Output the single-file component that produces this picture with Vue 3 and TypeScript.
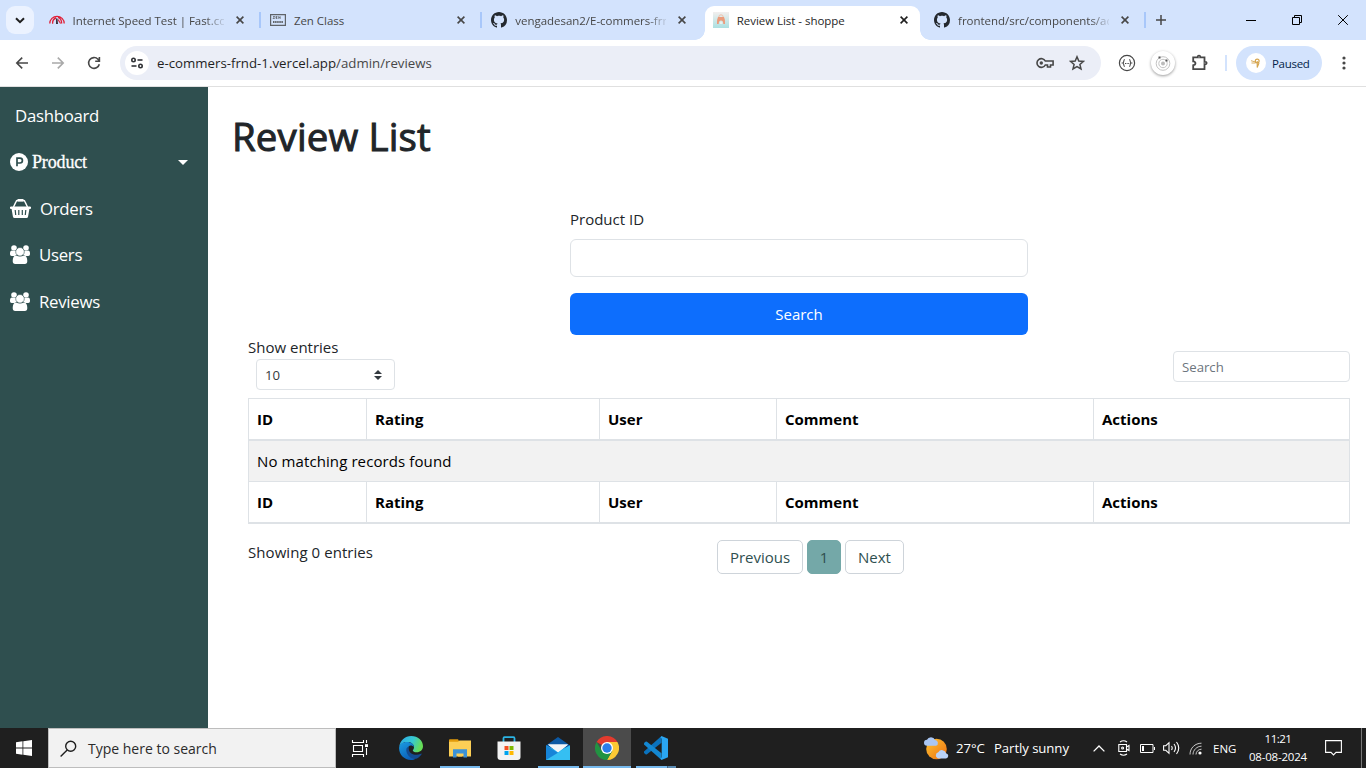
<script setup lang="ts">
import { ref } from 'vue'

interface Tab {
  id: number
  title: string
  icon: 'speed' | 'zen' | 'github' | 'shop'
  active?: boolean
}

const tabs: Tab[] = [
  { id: 1, title: 'Internet Speed Test | Fast.com', icon: 'speed' },
  { id: 2, title: 'Zen Class', icon: 'zen' },
  { id: 3, title: 'vengadesan2/E-commers-frnd', icon: 'github' },
  { id: 4, title: 'Review List - shoppe', icon: 'shop', active: true },
  { id: 5, title: 'frontend/src/components/admin', icon: 'github' },
]

const columns = ['ID', 'Rating', 'User', 'Comment', 'Actions']
const productId = ref('')
</script>

<template>
  <div class="screen">
    <header class="tabstrip">
      <button class="tabsearch" aria-label="Search tabs">
        <svg width="10" height="7" viewBox="0 0 10 7"><path d="M1 1.2l4 4 4-4" fill="none" stroke="#1f1f1f" stroke-width="2" /></svg>
      </button>
      <div class="tabs">
        <div v-for="tab in tabs" :key="tab.id" class="slot">
          <div class="tab" :class="{ active: tab.active, divided: tab.id !== 3 && !tab.active }">
            <svg v-if="tab.icon === 'speed'" class="fav" viewBox="0 0 16 16" fill="none">
              <path d="M.8 11.500a7.200 7.200 0 0 1 14.400 0M3.600 11.800c-.2-3 1.300-5.200 3.600-5.800M9 5.400c2.200.7 3.600 3 3.700 6" stroke="#e02038" stroke-width="1.300" />
              <path d="M9 7.500l2.600 4" stroke="#e02038" stroke-width="1.200" />
              <path d="M7 6.500h1.500l.5 5.500H7z" fill="#3b3540" />
            </svg>
            <svg v-else-if="tab.icon === 'zen'" class="fav" viewBox="0 0 16 16" fill="none">
              <path d="M.6 2.600h14.800v10.800H.6z" stroke="#5f6368" stroke-width="1.200" />
              <path d="M3 4.500h1.800L3 6.500h1.800M7.400 4.500H6v2h1.400M6 5.500h1.200M8.700 6.800V4.500l1.500 2V4.300" stroke="#5f6368" stroke-width=".8" />
              <path d="M3 9.500h10M3 10.500h10" stroke="#5f6368" stroke-dasharray="1.500 .6" stroke-width="1" />
            </svg>
            <svg v-else-if="tab.icon === 'github'" class="fav" viewBox="0 0 16 16" fill="#24292f">
              <path d="M8 0C3.580 0 0 3.580 0 8c0 3.540 2.290 6.530 5.470 7.590.4.070.55-.17.55-.38 0-.19-.010-.82-.010-1.490-2.010.37-2.530-.49-2.690-.94-.090-.23-.48-.94-.82-1.130-.28-.15-.68-.52-.010-.53.63-.010 1.080.58 1.230.82.72 1.210 1.870.87 2.330.66.070-.52.28-.87.51-1.070-1.780-.2-3.640-.89-3.640-3.950 0-.87.31-1.590.82-2.150-.080-.2-.36-1.020.080-2.120 0 0 .67-.21 2.200.82.64-.18 1.320-.27 2-.27s1.360.090 2 .27c1.530-1.040 2.200-.82 2.200-.82.44 1.100.16 1.920.080 2.120.51.56.82 1.270.82 2.150 0 3.070-1.870 3.750-3.650 3.950.29.25.54.73.54 1.480 0 1.070-.010 1.930-.010 2.200 0 .21.15.46.55.38A8.010 8.010 0 0 0 16 8c0-4.420-3.580-8-8-8z" />
            </svg>
            <svg v-else class="fav" viewBox="0 0 16 16" fill="none">
              <defs><linearGradient id="shopbg" x1="0" y1="0" x2="0" y2="1"><stop offset="0" stop-color="#f3efee" /><stop offset="1" stop-color="#abe0e1" /></linearGradient></defs>
              <path d="M0 0h16v16H0z" fill="url(#shopbg)" />
              <path d="M5.800 5a2.200 2.200 0 0 1 4.400 0" stroke="#f0bfa8" />
              <path d="M5 5h6q1.500 3 1 7h-1.700Q10.300 8.500 8 8.500T5.700 12H4q-.5-4 1-7z" fill="#eb9c7c" />
              <path d="M6.800 9.500h2.600V12H6.800z" fill="#e9f2ee" />
            </svg>
            <span class="title" :class="{ faded: tab.title.length > 22 }">{{ tab.title }}</span>
            <svg class="close" viewBox="0 0 8 8"><path d="M.6.6l6.800 6.800M7.400.6L.6 7.400" /></svg>
          </div>
        </div>
      </div>
      <svg class="plus" viewBox="0 0 10 10"><path d="M5 0v10M0 5h10" stroke="#474747" stroke-width="1.500" /></svg>
      <div class="window-controls">
        <svg viewBox="0 0 10 10"><path d="M0 5.500h10" /></svg>
        <svg viewBox="0 0 10 10"><path d="M.5 2.500h7v7h-7zM2.500 2.500v-2h7v7h-2" /></svg>
        <svg viewBox="0 0 10 10"><path d="M.2.2l9.600 9.600M9.800.2L.2 9.800" /></svg>
      </div>
    </header>

    <div class="toolbar">
      <nav class="history">
        <svg viewBox="0 0 16 16" stroke="#474747"><path d="M14 8H3M8.200 2.600L2.800 8l5.400 5.400" /></svg>
        <svg viewBox="0 0 16 16" stroke="#a9a9a9"><path d="M2 8h11M7.800 2.600L13.200 8l-5.400 5.400" /></svg>
        <svg viewBox="0 0 16 16" stroke="#474747"><path d="M13.300 9.200A5.400 5.400 0 1 1 12 4.300l1.200 1.300M13.400 2v4.200H9.200" /></svg>
      </nav>
      <div class="omnibox">
        <span class="site">
          <svg viewBox="0 0 14 14" fill="none" stroke="#303236" stroke-width="1.600"><circle cx="3.500" cy="4" r="1.700" /><path d="M7.500 4h5" /><circle cx="10.500" cy="10" r="1.700" /><path d="M1.500 10h5" /></svg>
        </span>
        <span class="url">e-commers-frnd-1.vercel.app<i>/admin/reviews</i></span>
        <svg class="key" viewBox="0 0 18 12" fill="none" stroke="#474747" stroke-width="1.600"><path d="M9.300 4a4.400 4.400 0 1 0 0 4h2.200v2h3V8h2.600V4z" /><circle cx="5.300" cy="6" r="1.700" fill="#474747" stroke="none" /></svg>
        <svg class="star" viewBox="0 0 16 16" fill="none" stroke="#474747" stroke-width="1.500"><path d="M8 1.800l1.800 4.200 4.600.4-3.500 3 1.100 4.500L8 11.500l-4 2.400 1.100-4.500-3.500-3 4.600-.4z" /></svg>
      </div>
      <div class="extensions">
        <svg class="braces" viewBox="0 0 18 18" fill="none" stroke="#474747"><circle cx="9" cy="9" r="7.600" stroke-width="1.200" /><path d="M6.800 5.500c-1.600 0-.3 3-2 3.500 1.700.5.400 3.500 2 3.500M11.200 5.500c1.600 0 .3 3 2 3.500-1.700.5-.4 3.500-2 3.500" stroke-width="1.100" /><path d="M7 9.500h1M8.600 9.500h1M10.200 9.500h1" stroke-width="1.100" /></svg>
        <span class="orbit"><svg viewBox="0 0 18 18" fill="none" stroke="#c4c4c4"><circle cx="9" cy="9.500" r="6.800" /><circle cx="9" cy="9.500" r="4.200" /><circle cx="9" cy="9.500" r="2" fill="#bbb" stroke="none" /><path d="M4.500 2.500h2v2h-2zM11.500 5.500h2v2h-2z" fill="#555" stroke="none" /></svg></span>
        <svg class="puzzle" viewBox="0 0 18 18" fill="none" stroke="#474747" stroke-width="1.800"><path d="M2.200 3.400h4.600c-.8-2.500 3.200-2.500 2.400 0h4.300v4.500c2.800-.7 2.800 3 0 2.300v5H2.200v-4c3-.4 3-3.400 0-3.800z" /></svg>
        <span class="divider"></span>
        <span class="profile">
          <span class="avatar"><svg viewBox="0 0 12 12" fill="none" stroke="#d5a44c"><path d="M1 3.700l4.500 1.300M1.500 6h4" stroke-width=".9" /><circle cx="7.200" cy="4" r="1.900" stroke-width="1.200" /><path d="M7.200 4v6.500L9 6" stroke-width="1.100" /></svg></span>
          <span class="paused">Paused</span>
        </span>
        <svg class="dots" viewBox="0 0 4 14" fill="#474747"><circle cx="2" cy="2" r="1.600" /><circle cx="2" cy="7" r="1.600" /><circle cx="2" cy="12" r="1.600" /></svg>
      </div>
    </div>

    <div class="page">
      <aside class="sidebar">
        <a class="item dash">Dashboard</a>
        <a class="item product">
          <svg class="picon" viewBox="0 0 18 18"><circle cx="9" cy="9" r="9" fill="#fff" /><path d="M7 13.300V5.200h3a2.300 2.300 0 0 1 0 4.800H7" fill="none" stroke="#2f4f4f" stroke-width="1.700" /></svg>
          <span>Product</span>
          <svg class="caret" viewBox="0 0 10 5"><path d="M0 0h10L5 5z" fill="#fff" /></svg>
        </a>
        <a class="item orders">
          <svg class="basket" viewBox="0 0 21 19" fill="none"><path d="M3.500 8l2.600-5.500Q6.500 1.500 7.500 1.500h6q1 0 1.400 1L17.500 8" stroke="#fff" stroke-width="1.500" /><path d="M7.600 0h5.800v2.500H7.600z" fill="#fff" /><path d="M1 7.500h19a1 1 0 0 1 0 2.500h-.6l-1.300 7.500q-.3 1.500-1.600 1.500h-12q-1.300 0-1.600-1.500L1.600 10H1a1 1 0 0 1 0-2.500z" fill="#fff" /><path d="M5.200 11l.5 5M8.800 11v5M12.300 11v5M15.800 11l-.5 5" stroke="#2f4f4f" stroke-width="1.200" /></svg>
          <span>Orders</span>
        </a>
        <a v-for="name in ['Users', 'Reviews']" :key="name" class="item people">
          <svg class="group" viewBox="0 0 20 19" fill="#fff"><circle cx="4" cy="3" r="2.800" /><circle cx="16" cy="3" r="2.800" /><path d="M0 8.500Q0 5.500 2 5.500q2 1 4 0l1 1v3L4.500 11H1.700Q0 11 0 9.200zM20 8.500q0-3-2-3-2 1-4 0l-1 1v3l2.500 1.500h2.800q1.700 0 1.700-1.800z" /><circle cx="10" cy="6.800" r="4.300" stroke="#2f4f4f" stroke-width=".6" /><path d="M2.700 16q0-5.600 3.400-5.600 3.900 2.300 7.800 0 3.400 0 3.400 5.600 0 3-2.500 3H5.200q-2.500 0-2.500-3z" /></svg>
          <span>{{ name }}</span>
        </a>
      </aside>

      <main class="content">
        <h1>Review List</h1>
        <form class="search" @submit.prevent>
          <label for="pid">Product ID</label>
          <input id="pid" v-model="productId" />
          <button type="submit">Search</button>
        </form>
        <section class="listing">
          <div class="controls">
            <div class="length">
              <div class="showlabel">Show entries</div>
              <div class="select">
                <span>10</span>
                <svg viewBox="0 0 8 10" fill="#343a40"><path d="M4 0l4 4H0zM4 10L0 6h8z" /></svg>
              </div>
            </div>
            <div class="filter">Search</div>
          </div>
          <table>
            <colgroup><col class="c1" /><col class="c2" /><col class="c3" /><col class="c4" /><col class="c5" /></colgroup>
            <thead><tr><th v-for="c in columns" :key="c">{{ c }}</th></tr></thead>
            <tbody><tr><td colspan="5">No matching records found</td></tr></tbody>
            <tfoot><tr><th v-for="c in columns" :key="c">{{ c }}</th></tr></tfoot>
          </table>
          <div class="footer">
            <div class="info">Showing 0 entries</div>
            <div class="pager">
              <button class="prev">Previous</button>
              <button class="current">1</button>
              <button class="next">Next</button>
            </div>
          </div>
        </section>
      </main>
    </div>

    <footer class="taskbar">
      <div class="start"><svg viewBox="0 0 16 16" fill="#fff"><path d="M0 2.200l6.500-.9v6.200H0zM7.300 1.200L16 0v7.500H7.300zM0 8.500h6.500v6.200L0 13.800zM7.300 8.500H16V16l-8.700-1.200z" /></svg></div>
      <div class="tsearch">
        <svg viewBox="0 0 17 17" fill="none" stroke="#1f1f1f" stroke-width="1.400"><circle cx="10.700" cy="6.300" r="5" /><path d="M7.200 9.900L.6 16.500" /></svg>
        <span>Type here to search</span>
      </div>
      <div class="app view"><svg width="18" height="17" viewBox="0 0 18 17" fill="none" stroke="#fff"><path d="M2.500 5.500h9v6h-9zM1.500 0v2.500h11V0M1.500 17v-2.500h11V17M15.500 0v3M15.500 8v7" stroke-width="1.100" /><path d="M14 4.200h3v2.800h-3z" fill="#fff" stroke="none" /></svg></div>
      <div class="app edge">
        <svg width="24" height="24" viewBox="0 0 24 24">
          <defs>
            <linearGradient id="e1" x1="0" y1="0" x2="1" y2=".3"><stop offset="0" stop-color="#2ba7e8" /><stop offset=".6" stop-color="#37c9d2" /><stop offset="1" stop-color="#66dd57" /></linearGradient>
            <linearGradient id="e2" x1="0" y1="0" x2=".6" y2="1"><stop offset="0" stop-color="#1b9de2" /><stop offset="1" stop-color="#0b5eb8" /></linearGradient>
          </defs>
          <path d="M.3 10.500C1.200 4.300 6 0 12.200 0 19 0 24 4.800 24 10.200c0 3.700-3 6-6.200 6-2.500 0-4-1-4-1.800 0-.7 1.200-1 1.200-3.200C15 8 12 6 8.500 6 4.500 6 1.500 8 .3 10.500z" fill="url(#e1)" />
          <path d="M.1 12C.2 8 4 6 8 6c4 0 6.900 2.200 6.900 5-.8-1-2-1.500-3-1.500-2.200 0-3.700 2.500-3.200 5.500.6 4 4.500 7 8 7.400C15.500 23.600 14 24 12 24 5 24-.1 18.500.1 12z" fill="url(#e2)" />
          <path d="M9.500 10.400c-2 .9-2.600 3-2 5.300 1.100 4.600 5.300 7.700 9.700 7 2.500-1 4.300-2.700 5.400-4.500.2-.5-.2-.8-.7-.5-5 2.500-11.500.3-12-4-.2-1.400 0-2.500-.4-3.300z" fill="#134b91" />
        </svg>
      </div>
      <div class="app files open">
        <svg width="22" height="19" viewBox="0 0 22 19"><path d="M0 1Q0 .3 1 .3h8L10.500 3H0z" fill="#e29b0b" /><path d="M0 2.800h9L10.500 1.500H22v16H0z" fill="#fccf56" /><path d="M4 18.500V10.300h14v8.200h-3.500v-4h-7v4z" fill="#3b92d6" /><path d="M9 15h4v2.500H9z" fill="#fccf56" /></svg>
      </div>
      <div class="app store">
        <svg width="24" height="25" viewBox="0 0 24 25"><path d="M6.500 6V2.200q0-1 1-1h9q1 0 1 1V6" fill="none" stroke="#2bb4e4" stroke-width="1.800" /><path d="M.5 5.500h23v15.500q0 3-3 3h-17q-3 0-3-3z" fill="#f3f3f3" /><path d="M7.500 10h4v4h-4z" fill="#f25022" /><path d="M12.500 10h4v4h-4z" fill="#7fba00" /><path d="M7.500 15h4v4h-4z" fill="#00a4ef" /><path d="M12.500 15h4v4h-4z" fill="#ffb900" /></svg>
      </div>
      <div class="app mail open">
        <svg width="24" height="23" viewBox="0 0 24 23"><path d="M0 8.500L12 0l12 8.500V12H0z" fill="#0c59a4" /><path d="M2 7.500h20L13 15h-2z" fill="#f2f5f8" /><path d="M0 8.500L12 14l12-5.500V23H0z" fill="#29b6ee" /><path d="M2 7.500h20L12 15.500z" fill="#f2f5f8" /><path d="M0 8.500L24 23H0z" fill="#1684d8" /><path d="M24 8.500L0 23h24z" fill="#35bff2" /></svg>
      </div>
      <div class="app chrome open">
        <svg width="24" height="24" viewBox="0 0 24 24"><path d="M12 12L1.600 6A12 12 0 0 1 22.400 6z" fill="#e33b2e" /><path d="M12 6h10.400A12 12 0 0 1 12 24l5.200-9z" fill="#fcc934" /><path d="M6.800 15L1.600 6A12 12 0 0 0 12 24l5.200-9z" fill="#229342" /><circle cx="12" cy="12" r="6" fill="#fff" /><circle cx="12" cy="12" r="4.700" fill="#2b7de9" /></svg>
      </div>
      <div class="app code open">
        <svg width="24" height="24" viewBox="0 0 24 24"><path d="M17.500 0L0 15.500q-.5 1 .3 1.700l1.200 1q.7.400 1.500 0L17.500 6.800z" fill="#0a72bd" /><path d="M17.500 24L0 8.500q-.5-1 .3-1.700l1.200-1q.7-.4 1.500 0l14.500 11.400z" fill="#1488d2" /><path d="M17.500 0L24 2.800v18.400L17.500 24l-1-1.500q1.200-.5 1.200-2V3.500q0-1.500-1.200-2z" fill="#2aa6f2" /></svg>
      </div>
      <div class="tray">
        <svg class="weather" viewBox="0 0 25 23"><defs><linearGradient id="sun" x1="0" y1="0" x2="1" y2="1"><stop offset="0" stop-color="#fdc32f" /><stop offset="1" stop-color="#ee6f13" /></linearGradient></defs><circle cx="12.500" cy="12" r="10.300" fill="url(#sun)" /><path d="M3 8.800a3 3 0 0 1 0-6A4.300 4.300 0 0 1 11 3a3 3 0 0 1 1 5.800z" fill="#a9c6f3" /><path d="M14 21.500a3.300 3.300 0 0 1 .3-6.300 4.300 4.300 0 0 1 7.800 1 2.700 2.700 0 0 1 0 5.300z" fill="#b9d2f8" /></svg>
        <span class="temp">27°C</span>
        <span class="cond">Partly sunny</span>
        <svg class="up" viewBox="0 0 12 7" fill="none" stroke="#fff" stroke-width="1.300"><path d="M.6 6.400L6 1l5.400 5.400" /></svg>
        <svg class="meet" viewBox="0 0 12 16" fill="none" stroke="#fff" stroke-width="1.100"><path d="M.8 4.500h7.700v7H.8zM8.500 7l2.500-1.500v5L8.500 9M2 2Q5.500-.5 9 2M2 14q3.500 2.500 7 0" /><circle cx="4.600" cy="8" r="1" /></svg>
        <svg class="battery" viewBox="0 0 15 9" fill="none" stroke="#fff"><path d="M.5.500h12.500v8H.5zM14.500 3v3" /><path d="M2 2h2v5H2z" fill="#fff" stroke="none" /></svg>
        <svg class="volume" viewBox="0 0 17 14" fill="none" stroke="#fff" stroke-width="1.100"><path d="M.6 4.700h2.200L6 1.700v10.600L2.800 9.300H.6zM8.500 5q1.400 2 0 4M11 3q3 4 0 8M13.500 1q4.500 6 0 12" /></svg>
        <svg class="wifi" viewBox="0 0 13 13" fill="none" stroke="#c9c9c9"><path d="M1 12.500C1 6 6 1.200 12.500 1.200M4 12.500C4 8 8 4.200 12.500 4.200M7 12.500c0-3 2.500-5.300 5.500-5.300" /><circle cx="11" cy="11" r="1.600" fill="#fff" stroke="none" /></svg>
        <span class="lang">ENG</span>
        <div class="clock"><span class="time">11:21</span><span class="date">08-08-2024</span></div>
        <svg class="note" viewBox="0 0 17 16" fill="none" stroke="#fff" stroke-width="1.100"><path d="M.6.600h15.800v11.800h-5.400L8.500 15 6 12.400H.6z" /></svg>
        <span class="peek"></span>
      </div>
    </footer>
  </div>
</template>

<style>
body { margin: 0; overflow: hidden; }
</style>

<style scoped>
* { box-sizing: border-box; }
.screen { width: 1366px; height: 768px; display: flex; flex-direction: column; overflow: hidden; background: #fff; font-family: "Open Sans", "Noto Sans", sans-serif; color: #212529; white-space: nowrap; }
svg { display: block; flex: none; }
button { font: inherit; padding: 0; border: 0; }

.tabstrip { height: 40px; flex: none; background: #d3e3fd; display: flex; align-items: center; padding-left: 6px; }
.tabsearch { width: 28px; height: 28px; border-radius: 9px; background: #ebf2ff; display: grid; place-items: center; margin-right: 6px; }
.tabs { display: flex; height: 40px; width: 1108px; }
.slot { width: 221.400px; flex: none; padding: 6px 6px 0 .5px; }
.tab { height: 34px; width: 215px; padding: 0 12px 6px 8px; display: flex; align-items: center; position: relative; font-size: 11.500px; letter-spacing: -.030px; color: #474747; }
.tab.active { background: #fff; border-radius: 9px 9px 0 0; color: #1f1f1f; }
.tab.active::before, .tab.active::after { content: ""; position: absolute; bottom: 0; width: 10px; height: 10px; }
.tab.active::before { left: -10px; background: radial-gradient(circle at 0 0, transparent 9.500px, #fff 10px); }
.tab.active::after { right: -10px; background: radial-gradient(circle at 100% 0, transparent 9.500px, #fff 10px); }
.tab.divided::after { content: ""; position: absolute; right: -5px; top: 6px; width: 2px; height: 16px; background: #a8c7fa; }
.fav { width: 16px; height: 16px; }
.title { width: 152px; margin-left: 8px; overflow: hidden; }
.title.faded { mask-image: linear-gradient(90deg, #000 132px, transparent 154px); }
.close { width: 8px; height: 8px; margin-left: 12px; fill: none; stroke: #474747; stroke-width: 1.600; }
.active .close { stroke: #1f1f1f; }
.plus { width: 10px; height: 10px; margin-left: 8px; }
.window-controls { display: flex; gap: 36px; margin-left: auto; margin-right: 18px; }
.window-controls svg { width: 10px; height: 10px; fill: none; stroke: #000; }

.toolbar { height: 47px; flex: none; display: flex; align-items: center; border-bottom: 1px solid #e0e0e0; padding-left: 14px; background: #fff; }
.history { display: flex; gap: 20px; width: 106px; }
.history svg { width: 16px; height: 16px; fill: none; stroke-width: 1.600; }
.omnibox { width: 981px; height: 34px; border-radius: 17px; background: #ebeef7; display: flex; align-items: center; padding: 0 16px 0 5px; }
.site { width: 24px; height: 24px; border-radius: 50%; background: #fff; display: grid; place-items: center; margin-right: 8px; }
.site svg { width: 14px; height: 14px; }
.url { font-size: 13.250px; color: #1f1f1f; flex: 1; }
.url i { font-style: normal; color: #474747; }
.key { width: 18px; height: 12px; margin-right: 15px; }
.star { width: 16px; height: 16px; }
.extensions { flex: 1; display: flex; align-items: center; }
.braces { width: 18px; height: 18px; margin-left: 17px; }
.orbit { width: 24px; height: 24px; border-radius: 50%; margin-left: 15px; display: grid; place-items: center; box-shadow: 0 1px 3px #0006; }
.orbit svg { width: 18px; height: 18px; }
.puzzle { width: 18px; height: 18px; margin-left: 16px; }
.divider { width: 2px; height: 16px; background: #d3e3fd; margin: 0 9px 0 16px; }
.profile { width: 86px; height: 34px; border-radius: 17px; background: #d3e3fd; display: flex; align-items: center; padding-left: 10px; }
.avatar { width: 20px; height: 20px; border-radius: 50%; background: #fff; display: grid; place-items: center; margin-right: 6px; }
.avatar svg { width: 12px; height: 12px; }
.paused { font-size: 11.500px; letter-spacing: -.300px; color: #041e49; }
.dots { width: 4px; height: 14px; margin-left: 20px; }

.page { flex: 1; display: flex; min-height: 0; }
.sidebar { width: 208px; background: #2f4f4f; color: #fff; padding-top: 5px; }
.item { height: 46.500px; display: flex; align-items: center; padding-left: 10px; font-size: 16.800px; letter-spacing: -.280px; }
.dash { padding-left: 15px; }
.product { font-family: "Liberation Serif", serif; font-size: 18px; letter-spacing: -.150px; padding-top: 1px; -webkit-text-stroke: .3px #fff; }
.picon { width: 18px; height: 18px; margin-right: 4px; }
.caret { width: 10px; height: 5px; margin-left: auto; margin-right: 20px; }
.basket { width: 21px; height: 19px; margin-right: 9px; }
.group { width: 20px; height: 19px; margin-right: 9px; }

.content { flex: 1; padding: 21px 16px 0 25px; font-size: 15px; }
h1 { margin: 0 0 0 -1px; font-size: 38.400px; line-height: 57px; height: 58px; font-weight: 400; letter-spacing: .150px; -webkit-text-stroke: 1px #212529; }
.search { width: 458px; margin: 41px 0 0 337px; display: flex; flex-direction: column; }
label { height: 32px; line-height: 24px; }
#pid { height: 38px; border: 1px solid #dee2e6; border-radius: 6px; padding: 6px 12px; outline: 0; font: inherit; margin-bottom: 16px; }
.search button { height: 42px; border-radius: 6px; background: #0d6efd; color: #fff; }
.listing { padding-left: 15px; }
.controls { display: flex; justify-content: space-between; height: 63px; }
.showlabel { height: 24px; line-height: 24px; }
.select { width: 139px; height: 31px; margin-left: 8px; border: 1px solid #dee2e6; border-radius: 4px; display: flex; align-items: center; justify-content: space-between; padding: 0 12px 0 8px; font-size: 13.200px; color: #343a40; }
.select svg { width: 8px; height: 10px; }
.filter { width: 177px; height: 31px; margin-top: 16px; border: 1px solid #dee2e6; border-radius: 4px; padding-left: 8px; display: flex; align-items: center; font-size: 13.200px; color: #6c757d; }
table { width: 1102px; border-collapse: separate; border-spacing: 0; table-layout: fixed; border: solid #dee2e6; border-width: 1px 0 0 1px; color: #000; }
.c1 { width: 118px; } .c2 { width: 233px; } .c3 { width: 177px; } .c4 { width: 317px; } .c5 { width: 256px; }
th, td { text-align: left; padding: 0 8px; border: solid #dee2e6; line-height: 24px; }
th { height: 42px; border-width: 0 1px 2px 0; font-weight: 700; }
td { height: 41px; border-width: 0 1px 1px 0; background: #f2f2f2; letter-spacing: .100px; }
.footer { display: flex; height: 50px; padding-top: 16px; }
.info { width: 469px; line-height: 24px; letter-spacing: .060px; }
.pager { display: flex; gap: 4px; }
.pager button { height: 34px; border: 1px solid #ced4da; border-radius: 5px; background: #fff; color: #2f4f4f; }
.pager .prev { width: 86px; }
.pager .current { width: 34px; background: #74a8a8; border-color: #74a8a8; }
.pager .next { width: 59px; }

.taskbar { height: 40px; flex: none; background: #1f1f1f; display: flex; color: #fff; }
.start { width: 48px; display: grid; place-items: center; }
.start svg { width: 16px; height: 16px; }
.tsearch { width: 288px; background: #f2f2f2; border: 1px solid #bdbdbd; color: #2b2b2b; display: flex; align-items: center; font-size: 14px; padding-left: 11px; }
.tsearch svg { width: 17px; height: 17px; margin-right: 11px; }
.app { width: 49px; display: grid; place-items: center; position: relative; }
.app.view, .app.mail { width: 50px; }
.app.view { padding-right: 2px; }
.open::after { content: ""; position: absolute; left: 5px; right: 4px; bottom: 0; height: 2px; background: #76b9ed; }
.app.chrome { width: 48px; background: #4b4b4b; }
.app.chrome::after { left: 0; right: 0; }
.app.code::after { background: linear-gradient(90deg, #76b9ed 31px, #46657e 31px, #46657e 32px, #5a8bb3 32px); }
.tray { flex: 1; display: flex; align-items: center; padding-left: 244px; }
.weather { width: 25px; height: 23px; }
.temp, .cond { font-size: 13.200px; letter-spacing: -.080px; }
.temp { margin-left: 7px; width: 38px; }
.cond { width: 99px; }
.up { width: 12px; height: 7px; }
.meet { width: 12px; height: 16px; margin-left: 13px; }
.battery { width: 15px; height: 9px; margin-left: 10px; }
.volume { width: 17px; height: 14px; margin-left: 8px; }
.wifi { width: 13px; height: 13px; margin-left: 9px; }
.lang { font-size: 11.500px; margin-left: 11px; width: 33px; }
.clock { width: 64px; display: flex; flex-direction: column; align-items: center; font-size: 11.500px; line-height: 18px; letter-spacing: -.200px; }
.time { letter-spacing: -.500px; }
.note { width: 17px; height: 16px; margin-left: 15px; }
.peek { width: 1px; height: 40px; background: #777; margin-left: auto; margin-right: 4px; }
</style>
